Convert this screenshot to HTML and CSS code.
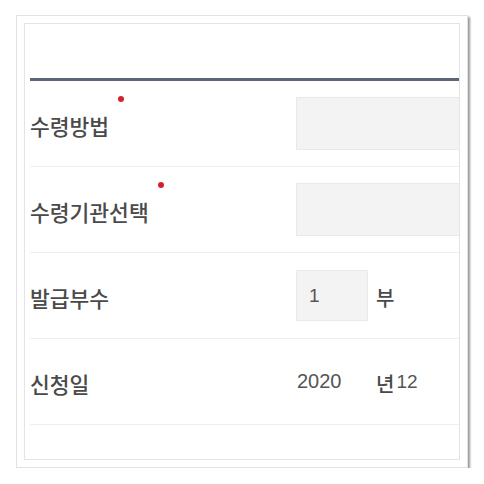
FILE: index.html
```html
<!DOCTYPE html>
<html lang="ko">
<head>
<meta charset="utf-8">
<title>신청</title>
<link rel="stylesheet" href="styles.css">
</head>
<body>
<div class="frame">
  <div class="panel">
    <div class="head"></div>
    <div class="form">
      <div class="row">
        <div class="label"><span class="text">수령방법</span><span class="req"></span></div>
        <div class="field"><div class="box wide"></div></div>
      </div>
      <div class="row">
        <div class="label"><span class="text">수령기관선택</span><span class="req"></span></div>
        <div class="field"><div class="box wide"></div></div>
      </div>
      <div class="row">
        <div class="label"><span class="text">발급부수</span></div>
        <div class="field"><div class="box small">1</div><span class="unit">부</span></div>
      </div>
      <div class="row">
        <div class="label"><span class="text">신청일</span></div>
        <div class="field"><span class="year">2020</span><span class="unit">년</span><span class="month">12</span></div>
      </div>
    </div>
  </div>
</div>
</body>
</html>
```
FILE: styles.css
```css
html, body {
  margin: 0;
  padding: 0;
  background: #ffffff;
}
body {
  font-family: "Noto Sans CJK KR", "Noto Sans", sans-serif;
  color: #444;
}
.frame {
  box-sizing: border-box;
  margin: 15px 0 0 16px;
  width: 452px;
  height: 453px;
  padding: 7px;
  border: 1px solid #e2e2e2;
  box-shadow: 2px 2px 2px rgba(0, 0, 0, 0.4);
  background: #fff;
}
.panel {
  box-sizing: border-box;
  height: 100%;
  border: 1px solid #e4e4e4;
  padding-left: 5px;
  overflow: hidden;
}
.head {
  height: 54px;
}
.form {
  border-top: 3px solid #5d6579;
  width: 480px;
}
.row {
  display: flex;
  align-items: center;
  height: 85px;
  border-bottom: 1px solid #efefef;
}
.label {
  display: flex;
  align-items: center;
  width: 266px;
  flex: none;
  font-size: 21.5px;
  font-weight: 500;
  color: #4a4a4a;
  padding-top: 4px;
}
.req {
  width: 6px;
  height: 6px;
  border-radius: 50%;
  background: #d4212c;
  margin-left: 9px;
  align-self: flex-start;
  margin-top: -14px;
}
.field {
  display: flex;
  align-items: center;
  font-size: 19px;
  color: #555;
}
.box {
  box-sizing: border-box;
  background: #f3f3f3;
  border: 1px solid #e9e9e9;
}
.box.wide {
  width: 200px;
  height: 53px;
}
.box.small {
  width: 72px;
  height: 51px;
  display: flex;
  align-items: center;
  padding-left: 12px;
  font-family: "Liberation Sans", Arial, sans-serif;
  font-size: 19px;
}
.unit {
  margin-left: 8px;
  font-size: 20px;
  font-weight: 500;
  color: #4a4a4a;
  padding-top: 3px;
}
.year {
  font-family: "Liberation Sans", Arial, sans-serif;
  width: 71px;
  padding-left: 1px;
  font-size: 20px;
}
.month {
  font-family: "Liberation Sans", Arial, sans-serif;
  margin-left: 2px;
  font-size: 19px;
}
```
